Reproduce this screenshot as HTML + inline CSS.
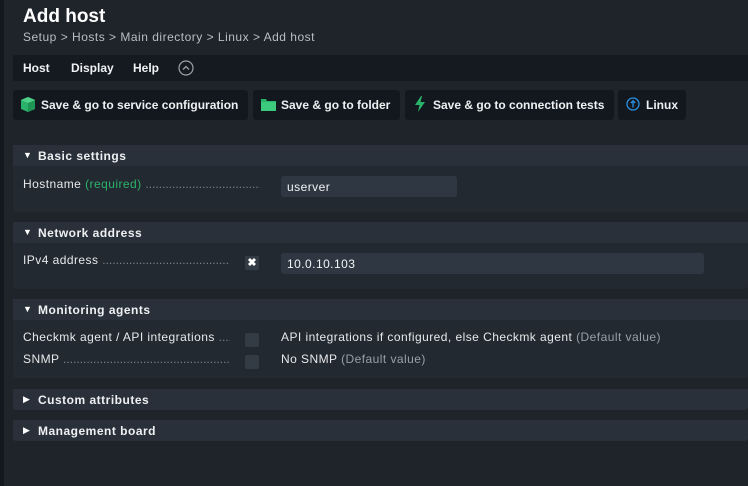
<!DOCTYPE html>
<html><head><meta charset="utf-8"><style>
*{box-sizing:border-box;margin:0;padding:0}
body{width:748px;height:486px;overflow:hidden;background:#1f242b;font-family:"Liberation Sans",sans-serif;color:#e6e9ec;position:relative}
.strip{position:absolute;left:0;top:0;width:4px;height:486px;background:#14181d}
.abs{position:absolute;white-space:nowrap}
h1{position:absolute;left:23px;top:6px;font-size:19px;font-weight:bold;color:#fff}
.bc{left:23px;top:30px;font-size:12px;color:#b8bec5;letter-spacing:.5px}
.menu{position:absolute;left:13px;top:55px;width:735px;height:26px;background:#151a20}
.menu span{position:absolute;top:6px;font-size:12px;font-weight:bold;color:#f0f2f4}
.btn{position:absolute;top:90px;height:30px;background:#13181e;border-radius:3px;font-size:12px;font-weight:bold;color:#eef0f2;padding:8px 0 0 0;white-space:nowrap}
.sec-h{position:absolute;left:13px;width:735px;height:21px;background:#29303a}
.sec-h span{position:absolute;left:25px;top:4px;font-size:12px;font-weight:bold;letter-spacing:.5px;color:#eef0f2}
.sec-h i{position:absolute;left:10px;top:5px;font-style:normal;font-size:9px;color:#fff}
.sec-b{position:absolute;left:13px;width:735px;background:#232930;border-radius:0 0 3px 3px}
.lbl{position:absolute;left:23px;font-size:12px;color:#e6e9ec;letter-spacing:.45px;white-space:nowrap;overflow:hidden}
.dots{color:#7b838c;letter-spacing:0px}
.inp{position:absolute;left:281px;height:21px;background:#2f3842;border-radius:3px;font-size:12px;padding:4px 6px;color:#f2f4f6;letter-spacing:.45px}
.cb{position:absolute;left:245px;width:14px;height:14px;background:#333b45;border-radius:2px}
.gray{color:#98a0a8}
.txt{font-size:12px;letter-spacing:.45px}
</style></head><body>
<div class="strip"></div>
<h1>Add host</h1>
<div class="abs bc">Setup &gt; Hosts &gt; Main directory &gt; Linux &gt; Add host</div>
<div class="menu">
<span style="left:10px">Host</span><span style="left:58px">Display</span><span style="left:120px">Help</span>
<svg style="position:absolute;left:165px;top:5px" width="16" height="16"><circle cx="8" cy="8" r="7" fill="none" stroke="#9aa1a8" stroke-width="1.2"/><path d="M5 9.5 L8 6.5 L11 9.5" fill="none" stroke="#9aa1a8" stroke-width="1.3"/></svg>
</div>
<div class="btn" style="left:13px;width:235px"><svg style="position:absolute;left:8px;top:7px" width="14" height="15"><path d="M7 0 L14 3 L14 12 L7 15 L0 12 L0 3Z" fill="#2bb26a"/><path d="M7 6 L14 3 L14 12 L7 15Z" fill="#1e9455"/><path d="M7 0 L14 3 L7 6 L0 3Z" fill="#4fd08a"/></svg><span style="position:absolute;left:28px">Save &amp; go to service configuration</span></div>
<div class="btn" style="left:253px;width:147px"><svg style="position:absolute;left:8px;top:8px" width="15" height="13"><path d="M0 1 L5 1 L6 3 L15 3 L15 13 L0 13Z" fill="#2bb26a"/><rect x="0" y="4" width="15" height="9" fill="#3ccb7c"/></svg><span style="position:absolute;left:28px">Save &amp; go to folder</span></div>
<div class="btn" style="left:405px;width:209px"><svg style="position:absolute;left:10px;top:6px" width="10" height="16"><path d="M6 0 L0 9 L4.5 9 L3 16 L10 6 L5.5 6 L7 0Z" fill="#2bb26a"/></svg><span style="position:absolute;left:28px">Save &amp; go to connection tests</span></div>
<div class="btn" style="left:618px;width:68px"><svg style="position:absolute;left:8px;top:7px" width="14" height="14"><circle cx="7" cy="7" r="6" fill="none" stroke="#2a8fe0" stroke-width="1.3"/><path d="M7 10.5 V4 M4.8 6 L7 3.8 L9.2 6" fill="none" stroke="#2a8fe0" stroke-width="1.3"/></svg><span style="position:absolute;left:28px">Linux</span></div>

<div class="sec-h" style="top:145px"><i>▼</i><span>Basic settings</span></div>
<div class="sec-b" style="top:166px;height:46px"></div>
<div class="lbl" style="top:177px;width:237px">Hostname <span style="color:#2cb36b">(required)</span> <span class="dots">..........................................................</span></div>
<div class="inp" style="top:176px;width:176px">userver</div>

<div class="sec-h" style="top:222px"><i>▼</i><span>Network address</span></div>
<div class="sec-b" style="top:243px;height:46px"></div>
<div class="lbl" style="top:253px;width:207px">IPv4 address <span class="dots">.......................................................................</span></div>
<div class="abs" style="left:245px;top:256px;width:14px;height:14px;background:#333b45;border-radius:2px;color:#fff;font-size:11px;font-weight:bold;text-align:center;line-height:14px">✖</div>
<div class="inp" style="top:253px;width:423px">10.0.10.103</div>

<div class="sec-h" style="top:299px"><i>▼</i><span>Monitoring agents</span></div>
<div class="sec-b" style="top:320px;height:58px"></div>
<div class="lbl" style="top:330px;width:207px">Checkmk agent / API integrations <span class="dots">.......................</span></div>
<div class="lbl" style="top:352px;width:207px">SNMP <span class="dots">..........................................................................................</span></div>
<div class="cb" style="top:333px"></div>
<div class="cb" style="top:355px"></div>
<div class="abs txt" style="left:281px;top:330px">API integrations if configured, else Checkmk agent <span class="gray">(Default value)</span></div>
<div class="abs txt" style="left:281px;top:352px">No SNMP <span class="gray">(Default value)</span></div>

<div class="sec-h" style="top:389px;border-radius:0 0 3px 3px"><i>▶</i><span>Custom attributes</span></div>
<div class="sec-h" style="top:420px;border-radius:0 0 3px 3px"><i>▶</i><span>Management board</span></div>
</body></html>
